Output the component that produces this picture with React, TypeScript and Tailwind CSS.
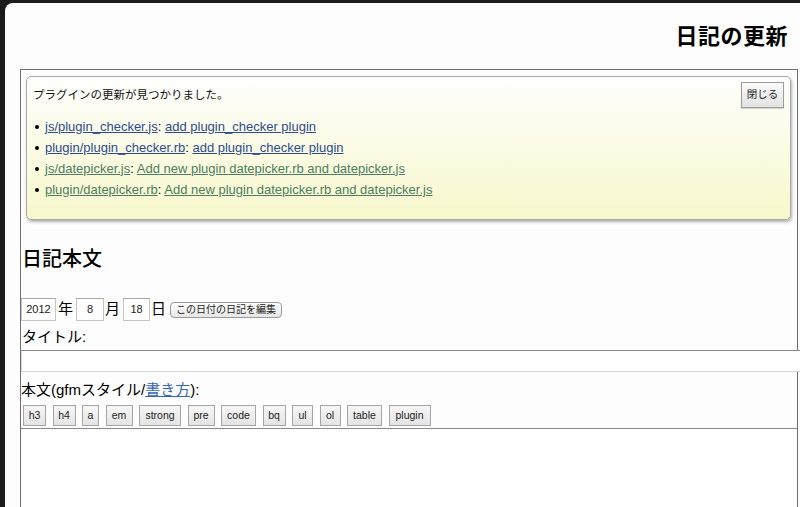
const FONT = "font-['Liberation_Sans','Noto_Sans_CJK_JP',sans-serif]";

const UPDATES = [
  { file: 'js/plugin_checker.js', msg: 'add plugin_checker plugin', visited: false },
  { file: 'plugin/plugin_checker.rb', msg: 'add plugin_checker plugin', visited: false },
  { file: 'js/datepicker.js', msg: 'Add new plugin datepicker.rb and datepicker.js', visited: true },
  { file: 'plugin/datepicker.rb', msg: 'Add new plugin datepicker.rb and datepicker.js', visited: true },
];

const TOOLS = [
  { label: 'h3', w: 'w-[23px]' },
  { label: 'h4', w: 'w-[23px]' },
  { label: 'a', w: 'w-[17px]' },
  { label: 'em', w: 'w-[27px]' },
  { label: 'strong', w: 'w-[42px]' },
  { label: 'pre', w: 'w-[27px]' },
  { label: 'code', w: 'w-[35px]' },
  { label: 'bq', w: 'w-[23px]' },
  { label: 'ul', w: 'w-[21px]' },
  { label: 'ol', w: 'w-[21px]' },
  { label: 'table', w: 'w-[35px]' },
  { label: 'plugin', w: 'w-[42px]' },
];

function DateInput({ value, width }: { value: string; width: string }) {
  return (
    <div
      className={`${width} h-[23px] border border-[#c4c4c4] border-t-[#a8a8a8] bg-white flex items-center justify-center text-[11px] text-[#222]`}
    >
      {value}
    </div>
  );
}

export default function App() {
  return (
    <div className={`w-[800px] h-[507px] overflow-hidden bg-[#1b1b1b] pt-[3px] pl-[5px] ${FONT}`}>
      <div className="h-[504px] rounded-tl-[8px] bg-[#fdfdfd] flex flex-col text-black">
        {/* Header */}
        <div className="h-[66px] shrink-0 flex items-center justify-end pr-[12px]">
          <h1 className="text-[22px] font-bold tracking-[0.5px]">日記の更新</h1>
        </div>

        {/* Form container */}
        <div className="ml-[15px] w-[778px] flex-1 border border-b-0 border-[#6e6e6e] flex flex-col">
          {/* Plugin notice */}
          <div className="ml-[5px] mt-[6px] w-[765px] h-[144px] shrink-0 rounded-[5px] border border-[#a9a9a9] bg-linear-to-b from-[#fefefe] to-[#f8f8cc] shadow-[1px_2px_3px_rgba(0,0,0,0.3)] px-[6px] pt-[5px]">
            <div className="flex justify-between items-start">
              <p className="text-[11.5px] mt-[5px] text-[#111]">プラグインの更新が見つかりました。</p>
              <button className="w-[43px] h-[26px] border border-[#9c9c9c] bg-linear-to-b from-[#fbfbfb] to-[#e2e2e2] text-[10.5px] text-[#222] shadow-[0_1px_1px_rgba(0,0,0,0.15)]">
                閉じる
              </button>
            </div>
            <ul className="mt-[8px] flex flex-col">
              {UPDATES.map((u) => (
                <li key={u.file} className="h-[21px] flex items-center text-[13px]">
                  <span className="ml-[2px] w-[4px] h-[4px] rounded-full bg-black" />
                  <span className="ml-[6px]">
                    <a className={`underline ${u.visited ? 'text-[#4c7d62]' : 'text-[#2f4b8e]'}`}>{u.file}</a>
                    <span>: </span>
                    <a className={`underline ${u.visited ? 'text-[#4c7d62]' : 'text-[#2f4b8e]'}`}>{u.msg}</a>
                  </span>
                </li>
              ))}
            </ul>
          </div>

          {/* Diary body heading */}
          <h2 className="mt-[25px] ml-[1px] h-[28px] leading-[28px] text-[20px] font-medium">日記本文</h2>

          {/* Date row */}
          <div className="mt-[25px] flex items-center text-[15px]">
            <DateInput value="2012" width="w-[35px]" />
            <span className="ml-[2px] w-[18px]">年</span>
            <DateInput value="8" width="w-[28px]" />
            <span className="ml-[1px] w-[18px]">月</span>
            <DateInput value="18" width="w-[27px]" />
            <span className="ml-[1px] w-[18px]">日</span>
            <button className="ml-[1px] h-[16px] px-[5px] rounded-[4px] border border-[#9a9a9a] bg-linear-to-b from-[#ffffff] to-[#e6e6e6] text-[10px] leading-none text-[#222]">
              この日付の日記を編集
            </button>
          </div>

          {/* Title */}
          <div className="mt-[5px] h-[22px] leading-[22px] text-[15px] ml-[1px]">タイトル:</div>
          <div className="mt-[2px] w-[800px] h-[22px] shrink-0 bg-white border border-[#d6d6d6] border-t-[#8a8a8a]" />

          {/* Body */}
          <div className="mt-[7px] h-[22px] leading-[22px] text-[15px]">
            本文(gfmスタイル/<a className="underline text-[#3566b8]">書き方</a>):
          </div>
          <div className="mt-[4px] ml-[2px] flex gap-[6.5px]">
            {TOOLS.map((t) => (
              <button
                key={t.label}
                className={`${t.w} h-[21px] border border-[#a5a5a5] bg-linear-to-b from-[#f7f7f7] to-[#e4e4e4] text-[10.5px] text-[#222] leading-none`}
              >
                {t.label}
              </button>
            ))}
          </div>
          <div className="mt-[2px] flex-1 bg-white border-t border-[#8a8a8a]" />
        </div>
      </div>
    </div>
  );
}
